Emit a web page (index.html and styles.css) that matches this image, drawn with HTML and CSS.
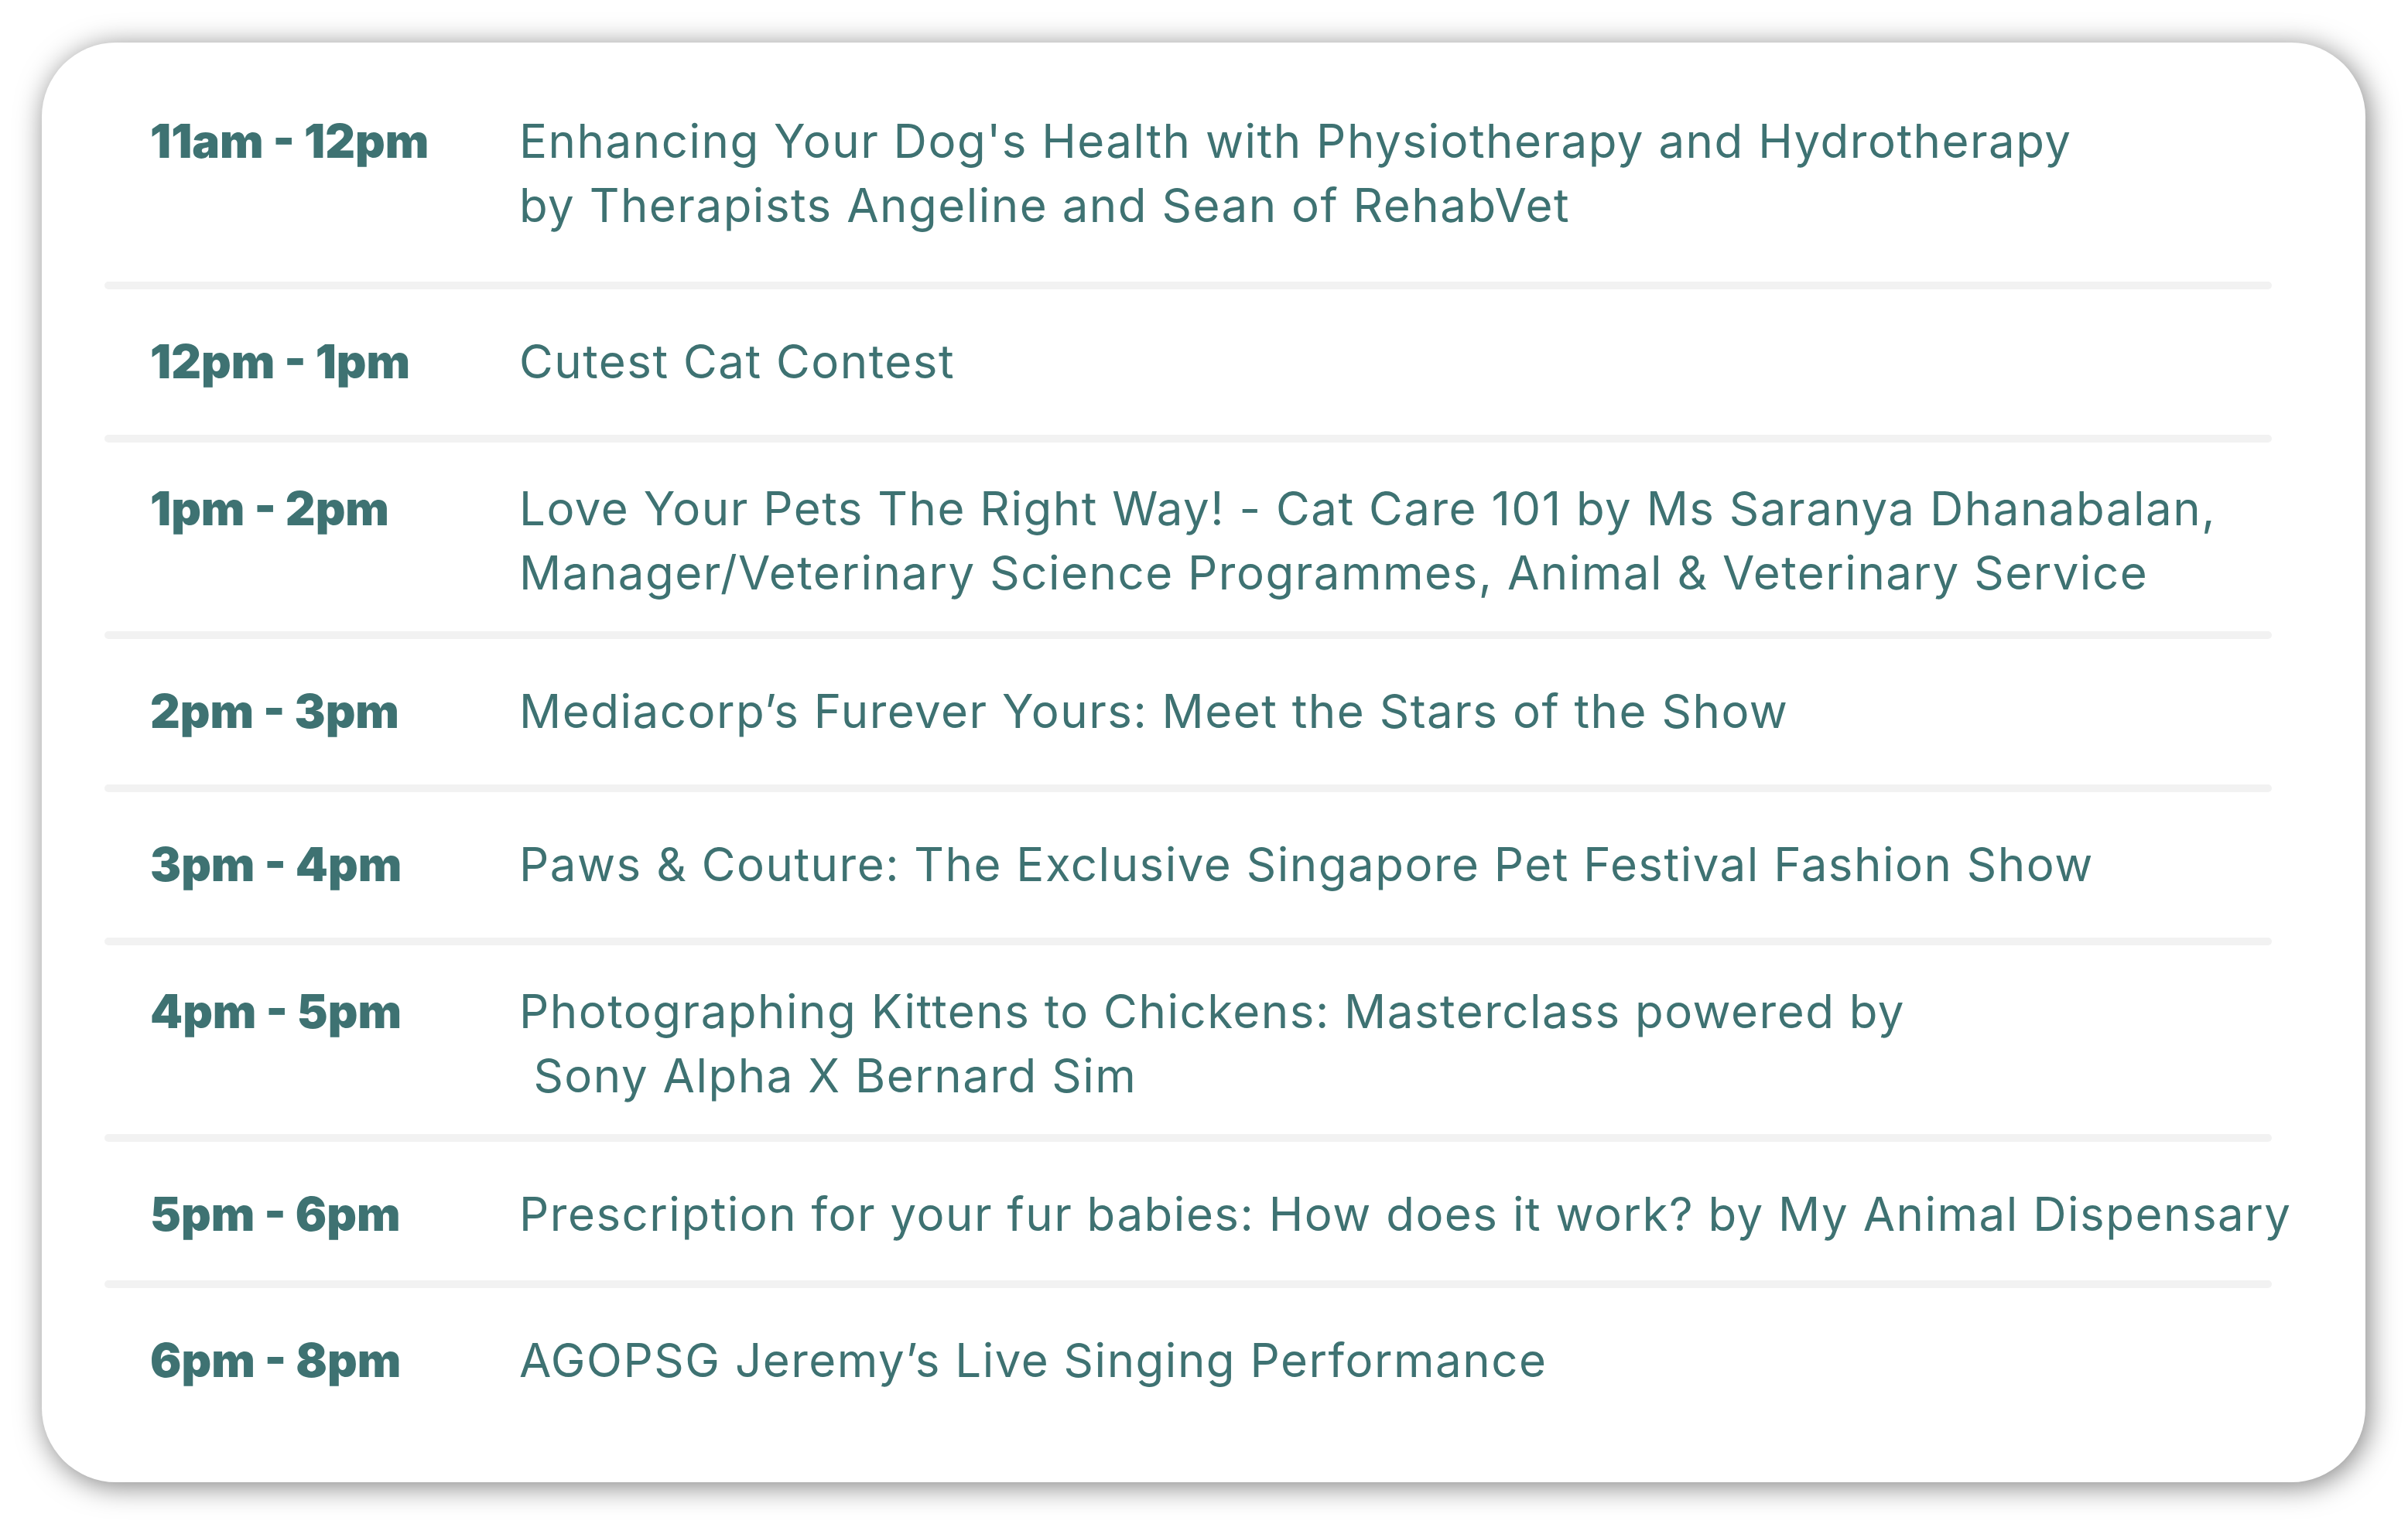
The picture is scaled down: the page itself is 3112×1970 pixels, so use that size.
FILE: index.html
```html
<!DOCTYPE html>
<html lang="en">
<head>
  <meta charset="UTF-8" />
  <meta name="viewport" content="width=device-width, initial-scale=1" />
  <title>Stage Programme</title>
  <link rel="stylesheet" href="styles.css">
</head>
<body>

  <div class="card">
    <div class="schedule">
      <div class="slot first">
        <div class="time">11am - 12pm</div>
        <div class="title">Enhancing Your Dog's Health with Physiotherapy and Hydrotherapy<br>by Therapists Angeline and Sean of RehabVet</div>
      </div>
      <div class="rule"></div>

      <div class="slot">
        <div class="time">12pm - 1pm</div>
        <div class="title">Cutest Cat Contest</div>
      </div>
      <div class="rule"></div>

      <div class="slot wrap">
        <div class="time">1pm - 2pm</div>
        <div class="title">Love Your Pets The Right Way! - Cat Care 101 by Ms Saranya Dhanabalan,<br>Manager/Veterinary Science Programmes, Animal &amp; Veterinary Service</div>
      </div>
      <div class="rule"></div>

      <div class="slot">
        <div class="time">2pm - 3pm</div>
        <div class="title">Mediacorp’s Furever Yours: Meet the Stars of the Show</div>
      </div>
      <div class="rule"></div>

      <div class="slot">
        <div class="time">3pm - 4pm</div>
        <div class="title">Paws &amp; Couture: The Exclusive Singapore Pet Festival Fashion Show</div>
      </div>
      <div class="rule"></div>

      <div class="slot wrap">
        <div class="time">4pm - 5pm</div>
        <div class="title">Photographing Kittens to Chickens: Masterclass powered by<br>&nbsp;Sony Alpha X Bernard Sim</div>
      </div>
      <div class="rule"></div>

      <div class="slot short">
        <div class="time">5pm - 6pm</div>
        <div class="title nowrap">Prescription for your fur babies: How does it work? by My Animal Dispensary</div>
      </div>
      <div class="rule"></div>

      <div class="slot">
        <div class="time">6pm - 8pm</div>
        <div class="title">AGOPSG Jeremy’s Live Singing Performance</div>
      </div>
    </div>
  </div>

</body>
</html>
```

FILE: styles.css
```css
* {
  box-sizing: border-box;
  margin: 0;
  padding: 0;
}

body {
  font-family: 'Inter', 'Open Sans', sans-serif;
  background-color: #ffffff;
  color: #3e7272;
  padding: 55px 55px 54px 54px;
}

.card {
  background: #ffffff;
  border-radius: 96px;
  width: 3003px;
  height: 1861px;
  padding: 44px 121px 64px 81px;
  box-shadow: 4px 5px 36px rgba(0, 0, 0, 0.5);
}

.schedule {
  display: flex;
  flex-direction: column;
}

.slot {
  display: grid;
  grid-template-columns: 477px 1fr;
  padding: 52px 0 53px 59px;
  font-size: 60px;
  line-height: 83px;
}

.slot.wrap {
  padding-top: 44px;
  padding-bottom: 34px;
}

.slot.short {
  padding-bottom: 44px;
}

.slot.first {
  padding-top: 42px;
  padding-bottom: 57px;
}

.time {
  font-weight: 900;
  letter-spacing: 0;
}

.title {
  font-weight: 400;
  letter-spacing: 1.5px;
}

.title.nowrap {
  white-space: nowrap;
}

.rule {
  height: 10px;
  border-radius: 5px;
  background-color: #f2f2f2;
}
```
